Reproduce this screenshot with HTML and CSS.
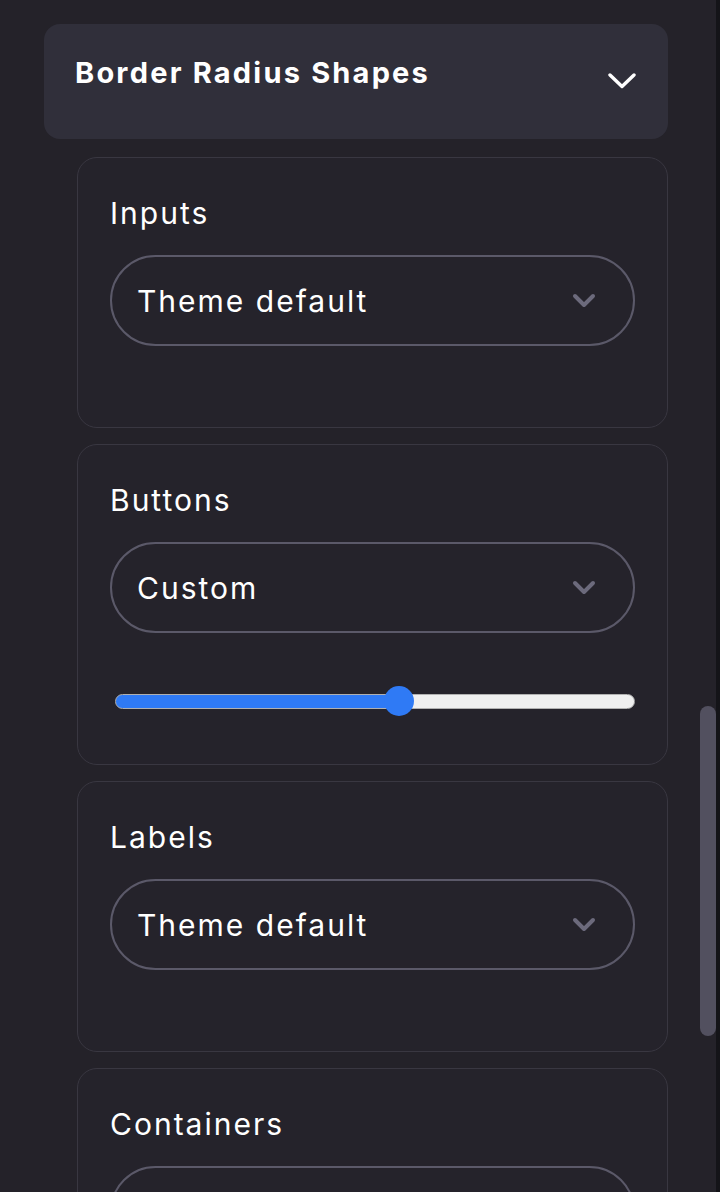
FILE: index.html
```html
<!DOCTYPE html>
<html lang="en">
<head>
    <meta charset="UTF-8">
    <meta name="viewport" content="width=device-width, initial-scale=1.0">
    <title>Border Radius Shapes</title>
    <link rel="stylesheet" href="styles.css">
</head>
<body>

    <div class="page">
        <div class="content">
            <div class="section-header">
                <h2>Border Radius Shapes</h2>
                <svg class="header-chevron" width="28" height="16" viewBox="0 0 28 16">
                    <path d="M2 2 L14 13.5 L26 2" fill="none" stroke="#fff" stroke-width="3.4" stroke-linecap="round" stroke-linejoin="round"/>
                </svg>
            </div>

            <div class="option-list">
                <div class="option-card">
                    <label class="option-label">Inputs</label>
                    <div class="select-box">
                        <span>Theme default</span>
                        <svg class="select-chevron" width="24" height="15" viewBox="0 0 24 15">
                            <path d="M3 3 L12 12 L21 3" fill="none" stroke="#6c6a7c" stroke-width="4" stroke-linecap="round" stroke-linejoin="round"/>
                        </svg>
                    </div>
                    <div class="spacer"></div>
                </div>

                <div class="option-card">
                    <label class="option-label">Buttons</label>
                    <div class="select-box">
                        <span>Custom</span>
                        <svg class="select-chevron" width="24" height="15" viewBox="0 0 24 15">
                            <path d="M3 3 L12 12 L21 3" fill="none" stroke="#6c6a7c" stroke-width="4" stroke-linecap="round" stroke-linejoin="round"/>
                        </svg>
                    </div>
                    <div class="slider-row">
                        <input type="range" class="radius-slider" min="0" max="100" value="55">
                    </div>
                </div>

                <div class="option-card">
                    <label class="option-label">Labels</label>
                    <div class="select-box">
                        <span>Theme default</span>
                        <svg class="select-chevron" width="24" height="15" viewBox="0 0 24 15">
                            <path d="M3 3 L12 12 L21 3" fill="none" stroke="#6c6a7c" stroke-width="4" stroke-linecap="round" stroke-linejoin="round"/>
                        </svg>
                    </div>
                    <div class="spacer"></div>
                </div>

                <div class="option-card">
                    <label class="option-label">Containers</label>
                    <div class="select-box">
                        <span>Theme default</span>
                        <svg class="select-chevron" width="24" height="15" viewBox="0 0 24 15">
                            <path d="M3 3 L12 12 L21 3" fill="none" stroke="#6c6a7c" stroke-width="4" stroke-linecap="round" stroke-linejoin="round"/>
                        </svg>
                    </div>
                    <div class="spacer"></div>
                </div>
            </div>
        </div>

        <div class="scroll-track">
            <div class="scroll-thumb"></div>
        </div>
    </div>

</body>
</html>
```

FILE: styles.css
```css
body {
    margin: 0;
    background-color: #242229;
    font-family: Inter, "Noto Sans", sans-serif;
    color: #fff;
}
.page {
    display: flex;
    height: 1192px;
    overflow: hidden;
}
.content {
    flex: 1;
    height: 1188px;
    overflow: hidden;
    padding: 24px 32px 0 44px;
}
.section-header {
    display: flex;
    justify-content: space-between;
    align-items: flex-start;
    box-sizing: border-box;
    height: 115px;
    padding: 28px 32px 0 31px;
    background-color: #302f3a;
    border-radius: 16px;
}
.section-header h2 {
    margin: 0;
    font-size: 29px;
    font-weight: 700;
    line-height: 42px;
    letter-spacing: 2.2px;
}
.header-chevron {
    margin-top: 21px;
}
.option-list {
    display: flex;
    flex-direction: column;
    gap: 16px;
    margin: 18px 0 0 33px;
}
.option-card {
    display: flex;
    flex-direction: column;
    padding: 33px 32px 32px 32px;
    border: 1px solid #393741;
    border-radius: 20px;
    background-color: #25232b;
}
.option-label {
    font-size: 30px;
    line-height: 45px;
    letter-spacing: 2px;
    margin-bottom: 19px;
}
.select-box {
    display: flex;
    align-items: center;
    justify-content: space-between;
    box-sizing: border-box;
    height: 91px;
    padding: 0 37px 0 25px;
    border: 2px solid #5b5969;
    border-radius: 46px;
    font-size: 30px;
    letter-spacing: 2px;
}
.spacer {
    height: 49px;
}
.slider-row {
    display: flex;
    margin: 53px 0 16px 0;
    height: 30px;
    align-items: center;
}
.radius-slider {
    -webkit-appearance: none;
    appearance: none;
    width: 523px;
    height: 15px;
    margin: 0 0 0 5px;
    border-radius: 8px;
    border: 1px solid #b0b0b0;
    box-sizing: border-box;
    background: linear-gradient(to right, #2f7af5 0%, #2f7af5 55%, #efefef 55%, #efefef 100%);
}
.radius-slider::-webkit-slider-thumb {
    -webkit-appearance: none;
    width: 30px;
    height: 30px;
    border-radius: 50%;
    background-color: #2f7af5;
    border: none;
}
.scroll-track {
    width: 16px;
    border-right: 4px solid #141418;
}
.scroll-thumb {
    margin-top: 706px;
    height: 330px;
    border-radius: 8px;
    background-color: #52505f;
}
```
